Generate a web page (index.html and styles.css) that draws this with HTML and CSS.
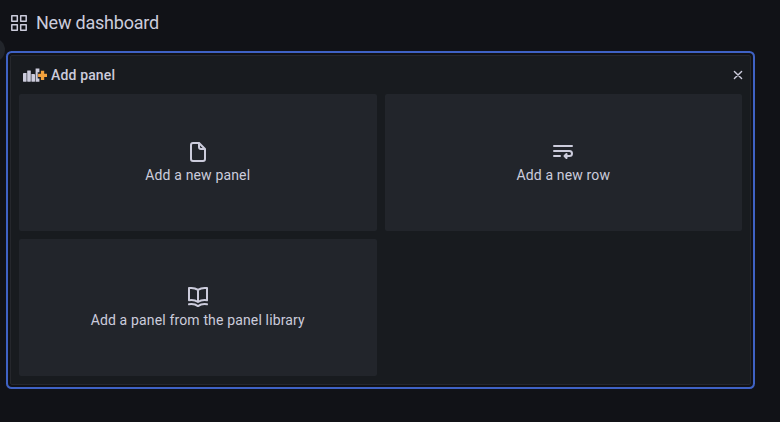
FILE: index.html
```html
<!DOCTYPE html>
<html lang="en">
<head>
    <meta charset="UTF-8">
    <meta name="viewport" content="width=device-width, initial-scale=1.0">
    <title>New dashboard</title>
    <link rel="stylesheet" href="styles.css">
</head>
<body>

<div class="menu-toggle"></div>

<header class="toolbar">
    <svg class="apps-icon" width="16" height="16" viewBox="0 0 16 16" fill="none" stroke="currentColor" stroke-width="1.5" stroke-linejoin="round">
        <rect x="0.8" y="0.8" width="5.5" height="5.5"/>
        <rect x="9.7" y="0.8" width="5.5" height="5.5"/>
        <rect x="0.8" y="9.7" width="5.5" height="5.5"/>
        <rect x="9.7" y="9.7" width="5.5" height="5.5"/>
    </svg>
    <h1>New dashboard</h1>
</header>

<div class="panel">
    <div class="panel-header">
        <svg class="panel-icon" width="24" height="14" viewBox="0 0 24 14">
            <g fill="#ccccdc">
                <rect x="0" y="5" width="3.6" height="8.7" rx="0.4"/>
                <rect x="4.2" y="2.4" width="3.6" height="11.3" rx="0.4"/>
                <rect x="8.4" y="6" width="3.6" height="7.7" rx="0.4"/>
                <path d="M12.6 0.4h3.8v3.900h-1.700v6.200h1.700v3.200h-3.800z"/>
            </g>
            <path fill="#f2a13c" d="M17.900 2.700h3.300v3h2.800v3.300h-2.800v3h-3.300v-3h-2.800v-3.300h2.800z"/>
        </svg>
        <span>Add panel</span>
        <button class="close" aria-label="Close">
            <svg width="10" height="10" viewBox="0 0 10 10" fill="none" stroke="currentColor" stroke-width="1.4" stroke-linecap="round">
                <path d="M1.4 1.4l7.2 7.2M8.6 1.4l-7.2 7.2"/>
            </svg>
        </button>
    </div>

    <div class="cards">
        <div class="card">
            <svg width="24" height="24" viewBox="0 0 24 24" fill="currentColor">
                <path d="M20 8.94a1.3 1.3 0 0 0-.06-.27v-.09a1 1 0 0 0-.19-.28l-6-6a1 1 0 0 0-.28-.19h-.09L13.06 2H7a3 3 0 0 0-3 3v14a3 3 0 0 0 3 3h10a3 3 0 0 0 3-3V8.94zM14 5.41L16.59 8H15a1 1 0 0 1-1-1zM18 19a1 1 0 0 1-1 1H7a1 1 0 0 1-1-1V5a1 1 0 0 1 1-1h5v3a3 3 0 0 0 3 3h3z"/>
            </svg>
            <span>Add a new panel</span>
        </div>
        <div class="card">
            <svg width="24" height="24" viewBox="0 0 24 24" fill="none" stroke="currentColor" stroke-width="2" stroke-linecap="round" stroke-linejoin="round">
                <path d="M3 6h18M3 11h15.500a2.500 2.500 0 0 1 0 5H14M3 16h6"/>
                <path d="M15.500 14l-2 2 2 2z" fill="currentColor"/>
            </svg>
            <span>Add a new row</span>
        </div>
        <div class="card">
            <svg width="24" height="24" viewBox="0 0 24 24" fill="none" stroke="currentColor" stroke-width="2" stroke-linecap="round" stroke-linejoin="round">
                <path d="M12 4.900C9.500 3.200 6.300 2.600 3 3.100v12.200c3.300-.5 6.500 0 9 1.700 2.500-1.700 5.700-2.200 9-1.700V3.100c-3.300-.5-6.500.1-9 1.800zM12 4.900v12"/>
                <path d="M3 19.300c3.300-.5 6.500 0 9 1.800 2.500-1.800 5.700-2.300 9-1.800"/>
            </svg>
            <span>Add a panel from the panel library</span>
        </div>
    </div>
</div>

</body>
</html>
```

FILE: styles.css
```css
* {
    box-sizing: border-box;
}
body {
    margin: 0;
    height: 422px;
    overflow: hidden;
    position: relative;
    background-color: #111217;
    color: #ccccdc;
    font-family: Roboto, "Liberation Sans", sans-serif;
    font-size: 14px;
    line-height: 22px;
    letter-spacing: 0.15px;
}
/* round sidebar button, mostly off the left edge */
.menu-toggle {
    position: absolute;
    left: -19px;
    top: 38px;
    width: 24px;
    height: 24px;
    border-radius: 50%;
    background-color: #22252b;
}
.toolbar {
    display: flex;
    align-items: center;
    height: 45px;
    padding-left: 11px;
}
.toolbar h1 {
    margin: 0 0 0 9px;
    font-size: 18px;
    font-weight: 400;
    letter-spacing: -0.22px;
}
.panel {
    width: 741px;
    height: 330px;
    margin: 10px 0 0 10px;
    padding: 0 8px 8px;
    background-color: #181b1f;
    border: 1px solid #25272c;
    border-radius: 2px;
    box-shadow: 0 0 0 2px #111217, 0 0 0 4px #3f62c4;
}
.panel-header {
    display: flex;
    align-items: center;
    height: 38px;
    padding: 0 0 0 4px;
    font-weight: 500;
}
.panel-icon {
    margin-right: 4px;
}
.close {
    display: flex;
    margin-left: auto;
    margin-right: -1px;
    padding: 0;
    border: none;
    background: none;
    color: #ccccdc;
    cursor: pointer;
}
.cards {
    display: grid;
    grid-template-columns: 1fr 1fr;
    grid-auto-rows: 137px;
    gap: 8px;
}
.card {
    display: flex;
    flex-direction: column;
    align-items: center;
    justify-content: center;
    background-color: #22252b;
    border-radius: 2px;
    cursor: pointer;
}
```
